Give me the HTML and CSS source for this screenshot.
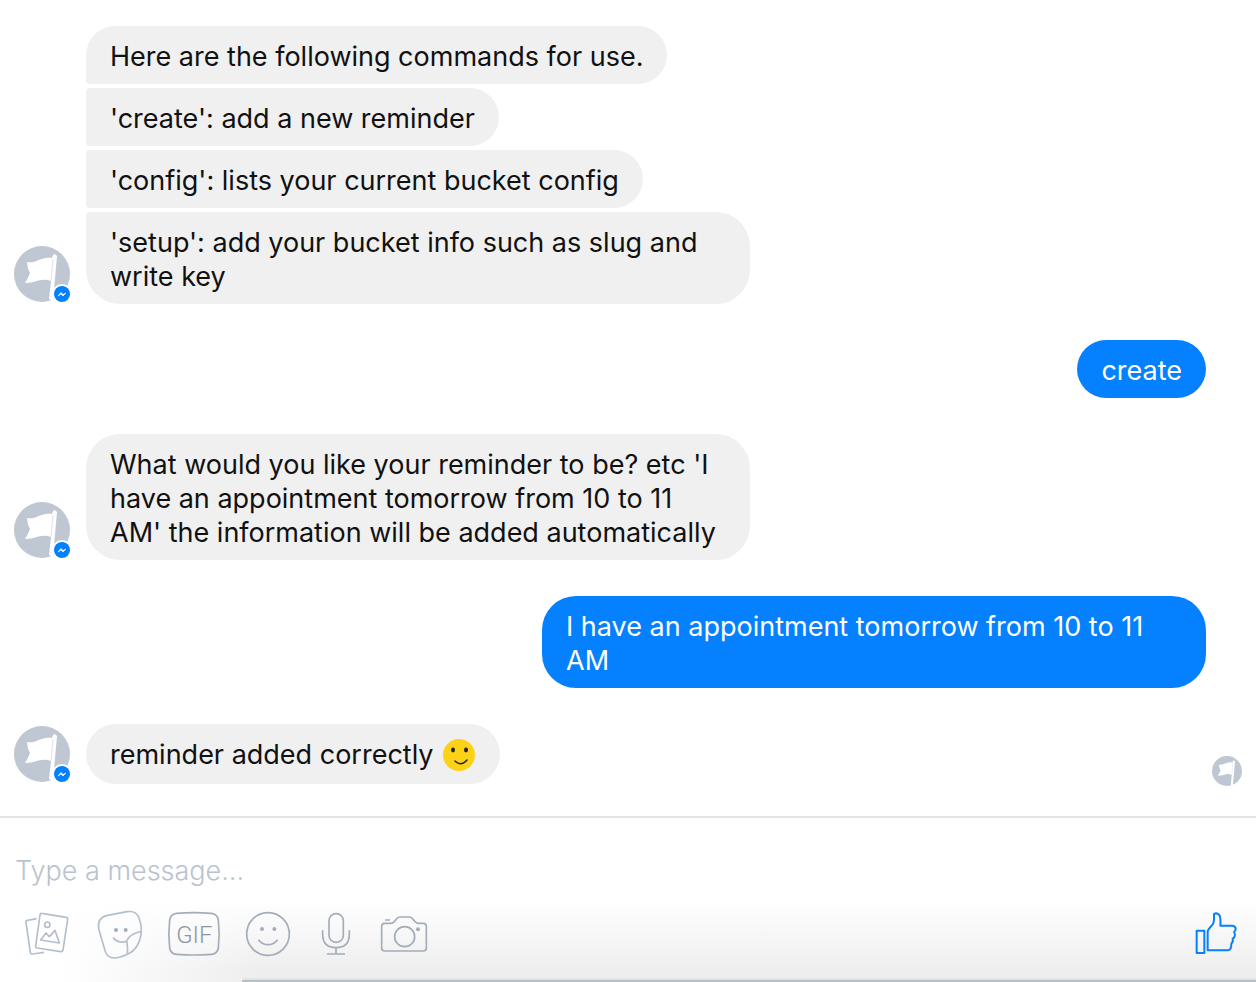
FILE: index.html
```html
<!DOCTYPE html>
<html lang="en">
<head>
<meta charset="utf-8">
<meta name="viewport" content="width=device-width, initial-scale=1">
<title>Messenger</title>
<link rel="stylesheet" href="styles.css">
</head>
<body>
<svg class="defs" aria-hidden="true">
  <symbol id="flag" viewBox="0 0 56 56">
    <circle cx="28" cy="28" r="28" fill="#bec7d2"/>
    <path d="M13 16 C22 18 27 10 38 12 L39 9 Q41 7 43 10 L39 55 L35 53 L37 35 C28 31 21 37 11 37 Q14 32 16 27 Q13 22 13 16 Z" fill="#fff"/>
    <path d="M39 13 L37 35" stroke="#dfe3e9" stroke-width="1"/>
  </symbol>
  <symbol id="badge" viewBox="0 0 20 20">
    <circle cx="10" cy="10" r="10" fill="#fff"/>
    <circle cx="10" cy="10" r="8" fill="#0580ff"/>
    <path d="M6 12 L9 8.5 L11 10.5 L14 9 L11 12 L9 10 Z" fill="#fff" stroke="#fff" stroke-width=".6"/>
  </symbol>
</svg>

<main class="thread">
  <section class="row">
    <div class="avatar"><svg class="face"><use href="#flag"/></svg><svg class="badge"><use href="#badge"/></svg></div>
    <div class="stack">
      <p class="bubble">Here are the following commands for use.</p>
      <p class="bubble">'create': add a new reminder</p>
      <p class="bubble">'config': lists your current bucket config</p>
      <p class="bubble">'setup': add your bucket info such as slug and write key</p>
    </div>
  </section>
  <section class="row mine">
    <p class="bubble">create</p>
  </section>
  <section class="row">
    <div class="avatar"><svg class="face"><use href="#flag"/></svg><svg class="badge"><use href="#badge"/></svg></div>
    <p class="bubble">What would you like your reminder to be? etc 'I have an appointment tomorrow from 10 to 11 AM' the information will be added automatically</p>
  </section>
  <section class="row mine">
    <p class="bubble">I have an appointment tomorrow from 10 to 11 AM</p>
  </section>
  <section class="row">
    <div class="avatar"><svg class="face"><use href="#flag"/></svg><svg class="badge"><use href="#badge"/></svg></div>
    <p class="bubble with-emoji">reminder added correctly
      <svg class="emoji" viewBox="0 0 34 34" role="img" aria-label="smile">
        <circle cx="17" cy="17" r="16" fill="#fcd116"/>
        <ellipse cx="11" cy="12" rx="2" ry="2.4" fill="#222"/><ellipse cx="24" cy="12" rx="2" ry="2.4" fill="#222"/>
        <path d="M13 23 Q19 29 25 22" fill="none" stroke="#222" stroke-width="1.4" stroke-linecap="round"/>
      </svg>
    </p>
    <svg class="seen" role="img" aria-label="Seen"><use href="#flag"/></svg>
  </section>
</main>

<form class="composer">
  <input class="message" type="text" placeholder="Type a message..." aria-label="Type a message">
  <div class="tools">
    <button type="button" class="tool photo" aria-label="Photos">
      <svg viewBox="66 54 150 162"><path d="M125 70 L199 82 Q204 83 203 88 L189 180 Q188 186 182 185 L111 174 Q106 173 107 168 L120 75 Q121 69 125 70Z M110 86 L82 91 Q77 92 78 97 L91 187 Q92 193 98 192 L132 187"/><circle cx="142" cy="104" r="8"/><path d="M122 150 L138 129 L148 140 L165 121 L178 159Z"/></svg>
    </button>
    <button type="button" class="tool sticker" aria-label="Stickers">
      <svg viewBox="282 54 156 162"><path d="M319 77 L381 65 Q409 61 417 84 Q425 104 424 124 Q419 177 382 193 Q346 210 330 201 Q318 196 314 178 L297 120 Q289 86 319 77Z M340 142 C345 155 366 160 380 153 Q387 132 424 124 M380 153 Q384 174 382 193"/><g class="dots"><circle cx="348" cy="120" r="6"/><circle cx="377" cy="120" r="6"/></g></svg>
    </button>
    <button type="button" class="tool gif" aria-label="GIF">
      <svg viewBox="504 54 156 162"><path d="M530 70 Q582 66 634 70 Q652 72 655 90 Q660 132 655 174 Q652 192 634 193 Q582 197 530 193 Q512 192 509 174 Q504 132 509 90 Q512 72 530 70Z"/><text x="583" y="159" text-anchor="middle">GIF</text></svg>
    </button>
    <button type="button" class="tool smile" aria-label="Emoji">
      <svg viewBox="36 54 156 162"><circle cx="114" cy="132" r="64"/><path d="M85 149 Q97 164 114 164 Q131 164 143 149"/><g class="dots"><circle cx="96" cy="117" r="6"/><circle cx="133" cy="117" r="6"/></g></svg>
    </button>
    <button type="button" class="tool mic" aria-label="Voice">
      <svg viewBox="258 54 126 162"><rect x="297" y="71" width="43" height="86" rx="21"/><path d="M278 121 V133 Q278 173 318 173 Q358 173 358 133 V121 M318 173 V192 M291 192 H345"/></svg>
    </button>
    <button type="button" class="tool camera" aria-label="Camera">
      <svg viewBox="450 54 144 162"><path d="M464 100 H482 Q490 100 494 94 L500 86 Q504 81 511 81 H537 Q544 81 548 86 L554 94 Q558 100 566 100 H580 Q589 100 589 109 V174 Q589 183 580 183 H464 Q455 183 455 174 V109 Q455 100 464 100Z M465 90 H480"/><circle cx="524" cy="140" r="30"/><g class="dots"><circle cx="564" cy="118" r="6"/></g></svg>
    </button>
    <button type="button" class="tool like" aria-label="Send a like">
      <svg viewBox="114 54 132 162"><path d="M122 122 H145 V189 H122Z M155 181 V125 Q156 118 166 108 Q174 101 174 90 V72 Q182 67 190 75 Q195 84 193 107 H230 Q238 108 239 116 Q239 123 234 126 Q239 133 236 139 Q234 144 230 146 Q233 155 226 161 Q227 178 217 181Z"/></svg>
    </button>
  </div>
  <div class="edge"></div>
</form>
</body>
</html>
```
FILE: styles.css
```css
* { box-sizing: border-box; }
body {
  margin: 0;
  min-height: 100vh;
  display: flex;
  flex-direction: column;
  background: #fff;
  color: #111;
  font: 27px/34px Inter, "Liberation Sans", sans-serif;
}
.defs { position: absolute; width: 0; height: 0; }
.thread {
  flex: 1;
  display: flex;
  flex-direction: column;
  gap: 36px;
  padding: 26px 14px 32px;
}
.row { display: flex; align-items: flex-end; gap: 16px; }
.mine { justify-content: flex-end; padding-right: 36px; }
.stack { display: flex; flex-direction: column; align-items: flex-start; gap: 4px; }
.bubble {
  margin: 0;
  max-width: 664px;
  padding: 14px 24px 10px;
  border-radius: 34px;
  background: #f0f0f0;
}
.stack .bubble { border-radius: 4px 30px 30px 4px; }
.stack .bubble:first-child { border-top-left-radius: 30px; }
.stack .bubble:last-child { border-radius: 4px 34px 34px 34px; }
.mine .bubble { background: #0580ff; color: #fff; }
.with-emoji { display: flex; align-items: center; gap: 8px; padding: 14px 24px 12px; }
.emoji { width: 34px; height: 34px; }
.avatar { position: relative; flex: none; width: 56px; height: 56px; margin-bottom: 2px; }
.face { display: block; width: 56px; height: 56px; }
.badge { position: absolute; right: -2px; bottom: -2px; width: 20px; height: 20px; }
.seen { width: 30px; height: 30px; margin-left: auto; margin-bottom: -2px; }
.composer {
  display: flex;
  flex-direction: column;
  border-top: 2px solid #e1e5e5;
  background:
    linear-gradient(to right, #fff 60px, transparent 260px),
    linear-gradient(#fff 50%, #eee 94%);
}
.message {
  margin: 36px 15px 20px;
  padding: 0;
  height: 34px;
  border: 0;
  outline: 0;
  background: transparent;
  font: inherit;
}
.message::placeholder { color: #b8c3cf; font-weight: 300; opacity: 1; }
.tools { display: flex; gap: 22px; padding: 0 18px 16px 22px; }
.tool { padding: 0; border: 0; background: none; height: 54px; }
.tool svg {
  display: block;
  width: 100%;
  height: 54px;
  overflow: visible;
  fill: none;
  stroke: #a3adba;
  stroke-width: 5;
  stroke-linejoin: round;
}
.photo svg, .sticker svg { stroke: #b4bfcc; }
.tool .dots { fill: #a3adba; stroke: none; }
.tool text { fill: #8d97a3; stroke: none; font: 300 72px Roboto, sans-serif; }
.photo { width: 50px; }
.sticker, .gif, .smile { width: 52px; }
.mic { width: 42px; }
.camera { width: 48px; }
.like { width: 44px; margin-left: auto; }
.like svg { stroke: #0580ff; stroke-width: 6; }
.edge {
  height: 4px;
  margin-left: 242px;
  border-top-left-radius: 4px;
  background: linear-gradient(#dfe4e4 50%, #b5bfc4 50%);
}
```
